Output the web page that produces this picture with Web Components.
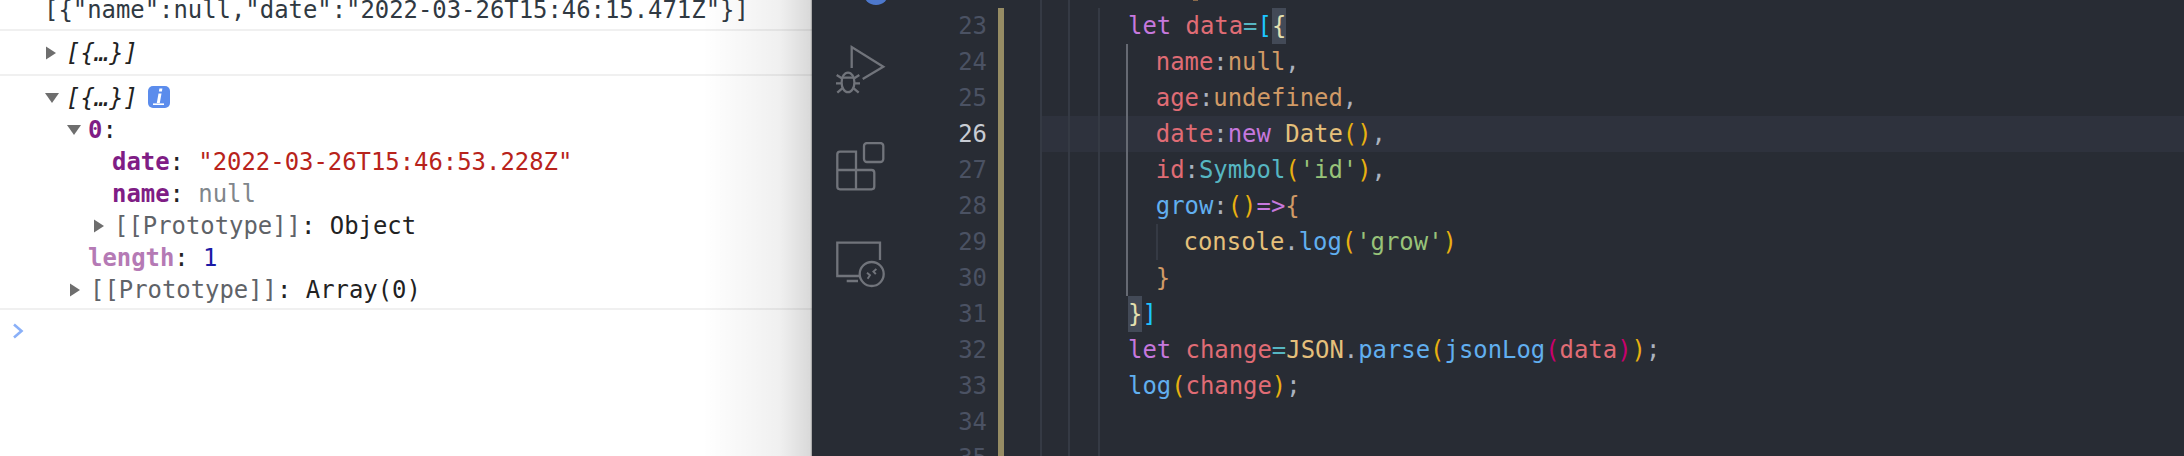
<!DOCTYPE html>
<html>
<head>
<meta charset="utf-8">
<title>console and editor</title>
<style>
  html, body { margin: 0; padding: 0; height: 456px; overflow: hidden; background: #fff; }
</style>
</head>
<body>
<split-view>
  <dev-console slot="left">
    <log-group>
      <log-row pad="44" class="first"><span class="plain">[{"name":null,"date":"2022-03-26T15:46:15.471Z"}]</span></log-row>
    </log-group>
    <log-group tall>
      <log-row pad="66" arrow="right"><span class="obj">[{…}]</span></log-row>
    </log-group>
    <log-group open>
      <log-row pad="66" arrow="down"><span class="obj">[{…}]</span><info-badge></info-badge></log-row>
      <log-row pad="88" arrow="down"><span class="key">0</span><span>:</span></log-row>
      <log-row pad="112"><span class="key">date</span><span>: </span><span class="str">"2022-03-26T15:46:53.228Z"</span></log-row>
      <log-row pad="112"><span class="key">name</span><span>: </span><span class="nul">null</span></log-row>
      <log-row pad="114" arrow="right"><span class="proto">[[Prototype]]</span><span>: Object</span></log-row>
      <log-row pad="88"><span class="dim">length</span><span>: </span><span class="num">1</span></log-row>
      <log-row pad="90" arrow="right"><span class="proto">[[Prototype]]</span><span>: Array(0)</span></log-row>
    </log-group>
    <console-prompt></console-prompt>
  </dev-console>

  <code-editor slot="right">
    <activity-bar slot="bar"></activity-bar>
    <code-line n="23"><span class="k">let</span> <span class="v">data</span><span class="o">=</span><span class="b1">[</span><span class="match">{</span></code-line>
    <code-line n="24" indent="1"><span class="v">name</span><span class="p">:</span><span class="c">null</span><span class="p">,</span></code-line>
    <code-line n="25" indent="1"><span class="v">age</span><span class="p">:</span><span class="c">undefined</span><span class="p">,</span></code-line>
    <code-line n="26" indent="1" active><span class="v">date</span><span class="p">:</span><span class="k">new</span> <span class="t">Date</span><span class="b2">()</span><span class="p">,</span></code-line>
    <code-line n="27" indent="1"><span class="v">id</span><span class="p">:</span><span class="o">Symbol</span><span class="b2">(</span><span class="s">'id'</span><span class="b2">)</span><span class="p">,</span></code-line>
    <code-line n="28" indent="1"><span class="f">grow</span><span class="p">:</span><span class="b2">()</span><span class="k">=&gt;</span><span class="c">{</span></code-line>
    <code-line n="29" indent="2"><span class="t">console</span><span class="p">.</span><span class="f">log</span><span class="b2">(</span><span class="s">'grow'</span><span class="b2">)</span></code-line>
    <code-line n="30" indent="1"><span class="c">}</span></code-line>
    <code-line n="31"><span class="match">}</span><span class="b1">]</span></code-line>
    <code-line n="32"><span class="k">let</span> <span class="v">change</span><span class="o">=</span><span class="t">JSON</span><span class="p">.</span><span class="f">parse</span><span class="b2">(</span><span class="f">jsonLog</span><span class="b3">(</span><span class="v">data</span><span class="b3">)</span><span class="b2">)</span><span class="p">;</span></code-line>
    <code-line n="33"><span class="f">log</span><span class="b2">(</span><span class="v">change</span><span class="b2">)</span><span class="p">;</span></code-line>
    <code-line n="34"></code-line>
    <code-line n="35"></code-line>
  </code-editor>
</split-view>

<script>
const MONO = `"DejaVu Sans Mono", "Liberation Mono", monospace`;

class SplitView extends HTMLElement {
  constructor() {
    super();
    this.attachShadow({ mode: "open" });
  }
  connectedCallback() {
    this.shadowRoot.innerHTML = `
      <style>
        :host { display: flex; width: 2184px; height: 456px; overflow: hidden; font: 23.9px/32px ${MONO}; }
        .left { display: block; width: 812px; flex: none; }
        .right { display: block; flex: 1; min-width: 0; }
      </style>
      <slot name="left" class="left"></slot>
      <slot name="right" class="right"></slot>
    `;
  }
}
customElements.define("split-view", SplitView);

class DevConsole extends HTMLElement {
  constructor() {
    super();
    this.attachShadow({ mode: "open" });
  }
  connectedCallback() {
    this.shadowRoot.innerHTML = `
      <style>
        :host { display: block; position: relative; height: 456px; background: #fff; overflow: hidden; }
        .shade {
          position: absolute; top: 0; right: 0; bottom: 0; width: 110px; pointer-events: none;
          background: linear-gradient(to right, rgba(0,0,0,0) 0, rgba(0,0,0,.06) 70%, rgba(0,0,0,.15) 98.5%, rgba(0,0,0,.33) 99.2%);
        }
      </style>
      <slot></slot>
      <div class="shade"></div>
    `;
  }
}
customElements.define("dev-console", DevConsole);

class LogGroup extends HTMLElement {
  constructor() {
    super();
    this.attachShadow({ mode: "open" });
  }
  connectedCallback() {
    this.shadowRoot.innerHTML = `
      <style>
        :host { display: block; border-bottom: 2px solid #f0f0f0; box-sizing: border-box; height: 31px; }
        :host([tall]) { height: 45px; padding-top: 6px; }
        :host([open]) { height: 234px; padding-top: 6px; }
      </style>
      <slot></slot>
    `;
  }
}
customElements.define("log-group", LogGroup);

class LogRow extends HTMLElement {
  static arrows = {
    right: `<svg width="12" height="14" viewBox="0 0 12 14"><path d="M1 0.5 L11 7 L1 13.5 Z" fill="#6e6e6e"/></svg>`,
    down: `<svg width="14" height="12" viewBox="0 0 14 12"><path d="M0 1 H14 L7 11 Z" fill="#6e6e6e"/></svg>`,
  };
  constructor() {
    super();
    this.attachShadow({ mode: "open" });
  }
  connectedCallback() {
    const pad = this.getAttribute("pad") || 0;
    const arrow = LogRow.arrows[this.getAttribute("arrow")];
    this.shadowRoot.innerHTML = `
      <style>
        :host { display: flex; align-items: center; height: 32px; padding-left: ${pad}px; color: #222; white-space: pre; }
        :host(.first) { height: 20px; }
        .arrow { display: flex; align-items: center; width: 21px; margin-left: -21px; flex: none; }
        ::slotted(.plain) { color: #303942; }
        ::slotted(.obj) { font-style: italic; color: #222; }
        ::slotted(.key) { color: #7f1d85; font-weight: bold; }
        ::slotted(.dim) { color: #b57ab5; font-weight: bold; }
        ::slotted(.str) { color: #b8231b; }
        ::slotted(.nul) { color: #80868b; }
        ::slotted(.num) { color: #1a1aa6; }
        ::slotted(.proto) { color: #5f6368; }
      </style>
      ${arrow ? `<span class="arrow">${arrow}</span>` : ""}
      <slot></slot>
    `;
  }
}
customElements.define("log-row", LogRow);

class InfoBadge extends HTMLElement {
  constructor() {
    super();
    this.attachShadow({ mode: "open" });
  }
  connectedCallback() {
    this.shadowRoot.innerHTML = `
      <style>
        :host { display: flex; flex: none; width: 22px; height: 22px; margin: 0 0 3px 10px; }
        svg { display: block; flex: none; }
      </style>
      <svg width="22" height="22" viewBox="0 0 22 22">
        <rect width="22" height="22" rx="5" fill="#5b8cec"/>
        <path d="M11.4 2.6h3l-.5 3h-3zM10.5 7.4h3L11.8 17h-3z" fill="#fff"/>
        <rect x="5" y="17.4" width="11" height="1.6" fill="#fff"/>
      </svg>
    `;
  }
}
customElements.define("info-badge", InfoBadge);

class ConsolePrompt extends HTMLElement {
  constructor() {
    super();
    this.attachShadow({ mode: "open" });
  }
  connectedCallback() {
    this.shadowRoot.innerHTML = `
      <style>
        :host { display: block; padding: 13px 0 0 12px; }
        svg { display: block; }
      </style>
      <svg width="12" height="16" viewBox="0 0 12 16"><path d="M2 1.5 L9.5 8 L2 14.5" fill="none" stroke="#8ab0f8" stroke-width="2.6"/></svg>
    `;
  }
}
customElements.define("console-prompt", ConsolePrompt);

class ActivityBar extends HTMLElement {
  constructor() {
    super();
    this.attachShadow({ mode: "open" });
  }
  connectedCallback() {
    this.shadowRoot.innerHTML = `
      <style>
        :host { display: flex; flex-direction: column; gap: 46px; position: relative; box-sizing: border-box; width: 134px; height: 456px; padding: 44px 0 0 22px; flex: none; }
        svg { display: block; fill: none; stroke: #71747b; stroke-width: 2.3; }
        .badge { position: absolute; left: 51px; top: -21px; width: 26px; height: 26px; border-radius: 50%; background: #4d78cc; }
      </style>
      <div class="badge"></div>
      <svg width="52" height="52" viewBox="0 0 52 52">
        <path d="M28.7 35 L49.3 22.7 L17.7 3 V24"/>
        <ellipse cx="14" cy="38.4" rx="6.4" ry="9.8"/>
        <path d="M7.8 33.7 H20.2 M2.7 31 L7.7 34.3 M2 39.3 H7 M3.3 48.7 L8.3 44.3 M25.3 31 L20.3 34.3 M26 39.3 H21 M24.7 48.7 L19.7 44.3"/>
      </svg>
      <svg width="52" height="52" viewBox="0 0 52 52">
        <rect x="30" y="1" width="19.3" height="19" rx="3"/>
        <path d="M22 28 V9.7 H6 Q3.3 9.7 3.3 12.4 V44.6 Q3.3 47.3 6 47.3 H37.6 Q40.3 47.3 40.3 44.6 V30.7 Q40.3 28 37.6 28 H3.3 M22 28 V47.3"/>
      </svg>
      <svg width="52" height="52" viewBox="0 0 52 52">
        <path d="M25 36 H3.3 V2.7 H46 V20 M12.7 41 H24"/>
        <circle cx="37.7" cy="34" r="12"/>
        <path d="M33 32.8 L36 35.3 L33.6 38.8 M42.4 29 L39.4 31.5 L41.8 34.2" stroke-width="1.9"/>
      </svg>
    `;
  }
}
customElements.define("activity-bar", ActivityBar);

class CodeEditor extends HTMLElement {
  constructor() {
    super();
    this.attachShadow({ mode: "open" });
  }
  connectedCallback() {
    this.shadowRoot.innerHTML = `
      <style>
        :host { display: flex; position: relative; height: 456px; background: #282c34; overflow: hidden; font: 23.9px/36px ${MONO}; }
        .lines { flex: 1; min-width: 0; padding-top: 8px; }
        i { position: absolute; display: block; width: 2px; background: #353a44; }
      </style>
      <slot name="bar"></slot>
      <div class="lines"><slot></slot></div>
      <i style="left:228px;top:0;bottom:0"></i>
      <i style="left:256px;top:0;bottom:0"></i>
      <i style="left:286px;top:8px;bottom:0"></i>
      <i style="left:314px;top:44px;height:252px;background:#666a73"></i>
      <i style="left:344px;top:224px;height:36px"></i>
      <i style="left:381px;top:0;height:1px;width:5px;background:#8a6a4a"></i>
    `;
  }
}
customElements.define("code-editor", CodeEditor);

class CodeLine extends HTMLElement {
  constructor() {
    super();
    this.attachShadow({ mode: "open" });
  }
  connectedCallback() {
    const indent = Number(this.getAttribute("indent") || 0);
    this.shadowRoot.innerHTML = `
      <style>
        :host { display: flex; height: 36px; white-space: pre; color: #abb2bf; }
        .num { width: 41px; margin-right: 11px; flex: none; text-align: right; color: #4b5263; }
        :host([active]) .num { color: #c8ccd4; }
        .bar { width: 6px; margin-right: 37px; flex: none; background: #968c64; }
        .body { flex: 1; min-width: 0; padding-left: ${87 + indent * 27.8}px; }
        :host([active]) .body { background: #2e323d; }
        ::slotted(.k) { color: #c678dd; }
        ::slotted(.v) { color: #e06c75; }
        ::slotted(.o) { color: #56b6c2; }
        ::slotted(.p) { color: #abb2bf; }
        ::slotted(.c) { color: #d19a66; }
        ::slotted(.t) { color: #e5c07b; }
        ::slotted(.f) { color: #61afef; }
        ::slotted(.s) { color: #98c379; }
        ::slotted(.b1) { color: #1cc4ff; }
        ::slotted(.b2) { color: #e8b010; }
        ::slotted(.b3) { color: #c8006e; }
        ::slotted(.match) { display: inline-block; color: #e4e0b0; background: #434a57; }
      </style>
      <div class="num">${this.getAttribute("n")}</div>
      <div class="bar"></div>
      <div class="body"><slot></slot></div>
    `;
  }
}
customElements.define("code-line", CodeLine);
</script>
</body>
</html>
